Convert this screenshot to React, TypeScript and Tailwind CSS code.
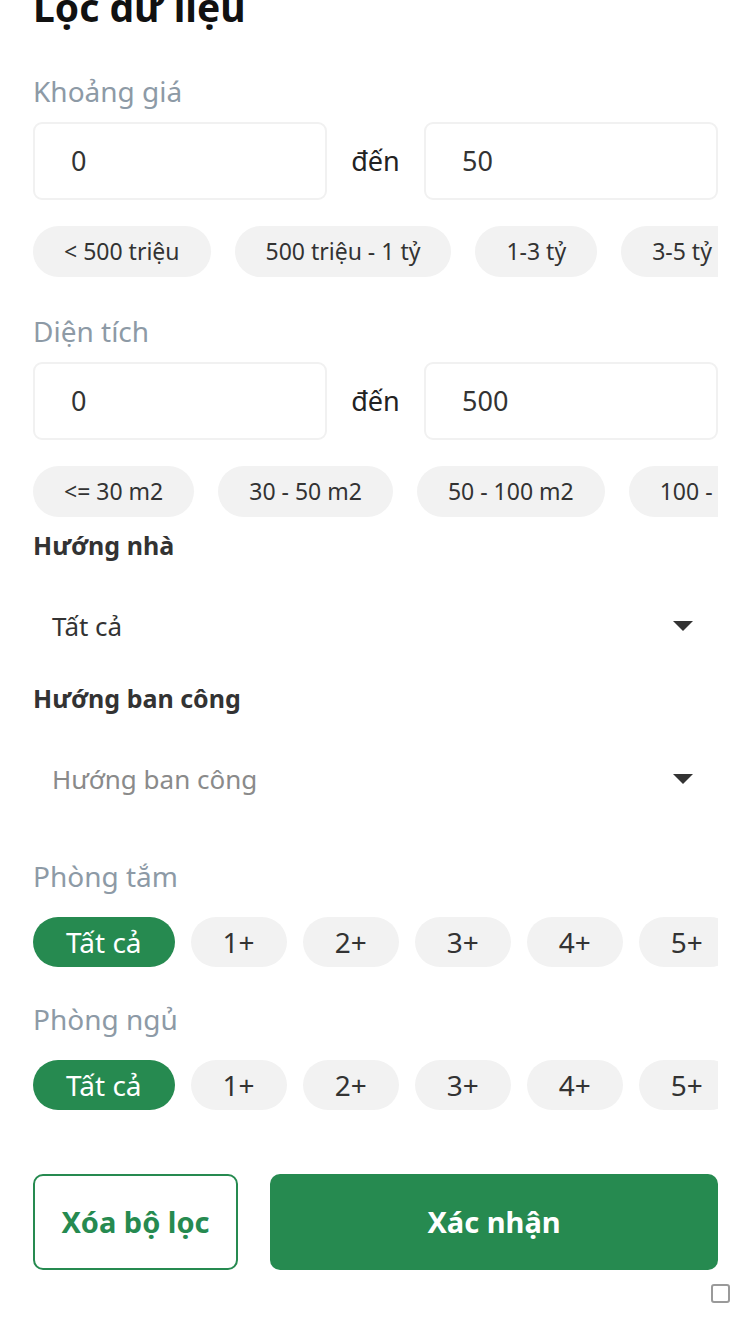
import { useState } from 'react'
import clsx from 'clsx'

const PRICE_CHIPS = ['< 500 triệu', '500 triệu - 1 tỷ', '1-3 tỷ', '3-5 tỷ', '5-10 tỷ']
const AREA_CHIPS = ['<= 30 m2', '30 - 50 m2', '50 - 100 m2', '100 - 200 m2']
const ROOM_OPTIONS = ['Tất cả', '1+', '2+', '3+', '4+', '5+']

const Label = ({ text, className }: { text: string; className?: string }) => (
  <div className={clsx('h-[36px] flex items-center text-[28px] leading-none text-[#8d9aa6]', className)}>{ text }</div>
)

const RangeInput = ({ from, to, className }: { from: string; to: string; className?: string }) => (
  <div className={clsx('flex h-[78px] w-[685px]', className)}>
    <div className="w-[294px] shrink-0 h-full border-2 border-[#f1f1f1] rounded-[9px] flex items-center pl-[36px] text-[27px] text-[#333]">{ from }</div>
    <div className="w-[97px] shrink-0 flex items-center justify-center text-[27px] text-[#222]">đến</div>
    <div className="w-[294px] shrink-0 h-full border-2 border-[#f1f1f1] rounded-[9px] flex items-center pl-[36px] text-[27px] text-[#333]">{ to }</div>
  </div>
)

const Chips = ({ items, className }: { items: string[]; className?: string }) => (
  <div className={clsx('flex gap-[24px] overflow-hidden', className)}>
    { items.map((v) => (
      <div key={v} className="h-[51px] shrink-0 rounded-full bg-[#f2f2f2] px-[31px] flex items-center text-[23px] text-[#333] whitespace-nowrap">{ v }</div>
    )) }
  </div>
)

const Select = ({ value, placeholder, className }: { value?: string; placeholder: string; className?: string }) => (
  <div className={clsx('h-[80px] flex items-center justify-between pl-[19px] pr-[25px]', className)}>
    <div className={clsx('text-[26px]', value ? 'text-[#333]' : 'text-[#8a8a8a]')}>{ value || placeholder }</div>
    <svg width="20" height="10" viewBox="0 0 20 10"><path d="M0 0 H20 L10 10 Z" fill="#333" /></svg>
  </div>
)

const Rooms = ({ className }: { className?: string }) => {
  const [selected, setSelected] = useState('Tất cả')
  return (
    <div className={clsx('flex gap-[16px] overflow-hidden', className)}>
      { ROOM_OPTIONS.map((v) => (
        <div
          key={v}
          onClick={() => setSelected(v)}
          className={clsx(
            'h-[50px] shrink-0 rounded-full flex items-center text-[28px] whitespace-nowrap',
            v === 'Tất cả' ? 'px-[33px]' : 'px-[32px]',
            selected === v ? 'bg-[#268a50] text-white' : 'bg-[#f2f2f2] text-[#333]',
          )}
        >{ v }</div>
      )) }
    </div>
  )
}

export default function App() {
  return (
    <div className="w-[750px] h-[1334px] overflow-hidden bg-white" style={{ fontFamily: '"Noto Sans", Lato, sans-serif' }}>
      <div className="pl-[33px] pr-[32px] flex flex-col">
        <div className="mt-[-15px] h-[44px] text-[39px] leading-[44px] font-bold text-[#111]">Lọc dữ liệu</div>

        <Label text="Khoảng giá" className="mt-[44px]" />
        <RangeInput from="0" to="50" className="mt-[13px]" />
        <Chips items={PRICE_CHIPS} className="mt-[26px]" />

        <Label text="Diện tích" className="mt-[36px]" />
        <RangeInput from="0" to="500" className="mt-[13px]" />
        <Chips items={AREA_CHIPS} className="mt-[26px]" />

        <div className="mt-[11px] h-[36px] flex items-center text-[25px] font-bold text-[#333]">Hướng nhà</div>
        <Select value="Tất cả" placeholder="Hướng nhà" className="mt-[22px]" />

        <div className="mt-[15px] h-[36px] flex items-center text-[25px] font-bold text-[#333]">Hướng ban công</div>
        <Select placeholder="Hướng ban công" className="mt-[22px]" />

        <Label text="Phòng tắm" className="mt-[39px]" />
        <Rooms className="mt-[23px]" />

        <Label text="Phòng ngủ" className="mt-[34px]" />
        <Rooms className="mt-[23px]" />

        <div className="mt-[64px] flex gap-[32px] h-[96px]">
          <button className="w-[205px] shrink-0 rounded-[10px] border-2 border-[#268a50] text-[#268a50] text-[29px] font-bold">Xóa bộ lọc</button>
          <button className="flex-1 rounded-[10px] bg-[#268a50] text-white text-[29px] font-bold">Xác nhận</button>
        </div>
      </div>
      <div className="flex justify-end pr-[20px] mt-[14px]">
        <div className="w-[19px] h-[19px] rounded-[3px] border-2 border-[#9a9a9a]" />
      </div>
    </div>
  )
}
